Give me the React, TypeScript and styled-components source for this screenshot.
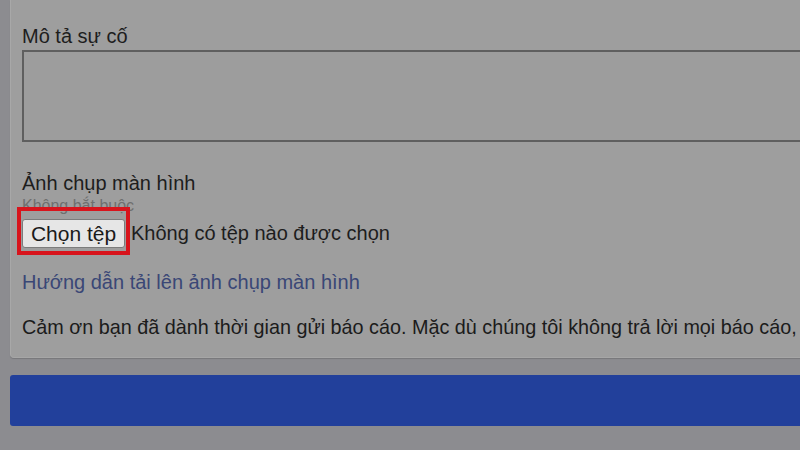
import styled, { createGlobalStyle } from "styled-components";

const GlobalStyle = createGlobalStyle`
  html, body {
    margin: 0;
    padding: 0;
    width: 800px;
    height: 450px;
    overflow: hidden;
    background: #8c8c90;
    font-family: "Liberation Sans", Arial, sans-serif;
  }
`;

const App = () => {
  return (
    <>
      <GlobalStyle />
      <Page>
        <Card>
          <Label>Mô tả sự cố</Label>
          <TextArea />
          <Label top={30}>Ảnh chụp màn hình</Label>
          <Hint>Không bắt buộc</Hint>
          <FileRow>
            <Highlight>
              <PickButton type="button">Chọn tệp</PickButton>
            </Highlight>
            <FileName>Không có tệp nào được chọn</FileName>
          </FileRow>
          <HelpLink href="#">Hướng dẫn tải lên ảnh chụp màn hình</HelpLink>
          <Note>
            Cảm ơn bạn đã dành thời gian gửi báo cáo. Mặc dù chúng tôi không
            trả lời mọi báo cáo,
          </Note>
        </Card>
        <SubmitBar type="button" />
      </Page>
    </>
  );
};

const Page = styled.div`
  width: 800px;
  height: 450px;
  padding-left: 10px;
  box-sizing: border-box;
  overflow: hidden;
`;

const Card = styled.div`
  width: 820px;
  height: 358px;
  box-sizing: border-box;
  padding: 25px 0 0 11px;
  background: #9e9e9e;
  border-left: 1px solid #a8a8a8;
  border-bottom: 1px solid #a6a6a6;
  border-bottom-left-radius: 4px;
  box-shadow: 0 1px 1px rgba(0, 0, 0, 0.15);
`;

const Label = styled.div<{ top?: number }>`
  margin-top: ${({ top }) => top ?? 0}px;
  font-size: 20px;
  line-height: 23px;
  color: #1d1d1d;
`;

const TextArea = styled.div`
  margin-top: 2px;
  width: 820px;
  height: 88px;
  border: 2px solid #5f5f5f;
  background: #9d9d9d;
`;

const Hint = styled.div`
  margin-top: 2px;
  font-size: 16px;
  line-height: 18px;
  color: #6f6f6f;
`;

const FileRow = styled.div`
  display: flex;
  align-items: center;
  gap: 6px;
  margin-top: 4px;
`;

/* red annotation frame drawn over the file button */
const Highlight = styled.span`
  position: relative;
  display: inline-flex;
  &::after {
    content: "";
    position: absolute;
    top: -12px;
    left: -5px;
    right: -5px;
    bottom: -7px;
    border: 4px solid #d8141c;
    pointer-events: none;
  }
`;

const PickButton = styled.button`
  width: 103px;
  height: 29px;
  padding: 0;
  font-family: "Liberation Sans", Arial, sans-serif;
  font-size: 21px;
  color: #1a1a1a;
  background: #e6e6e6;
  border: 1px solid #7c7c7c;
  border-radius: 3px;
`;

const FileName = styled.span`
  font-size: 20px;
  color: #1d1d1d;
`;

const HelpLink = styled.a`
  display: block;
  margin-top: 23px;
  font-size: 20px;
  line-height: 23px;
  color: #3a4776;
  text-decoration: none;
`;

const Note = styled.div`
  margin-top: 22px;
  font-size: 19.8px;
  line-height: 23px;
  color: #1b1b1b;
  white-space: nowrap;
`;

const SubmitBar = styled.button`
  display: block;
  margin-top: 17px;
  width: 820px;
  height: 51px;
  border: none;
  border-radius: 3px;
  background: #22409b;
`;

export default App;
